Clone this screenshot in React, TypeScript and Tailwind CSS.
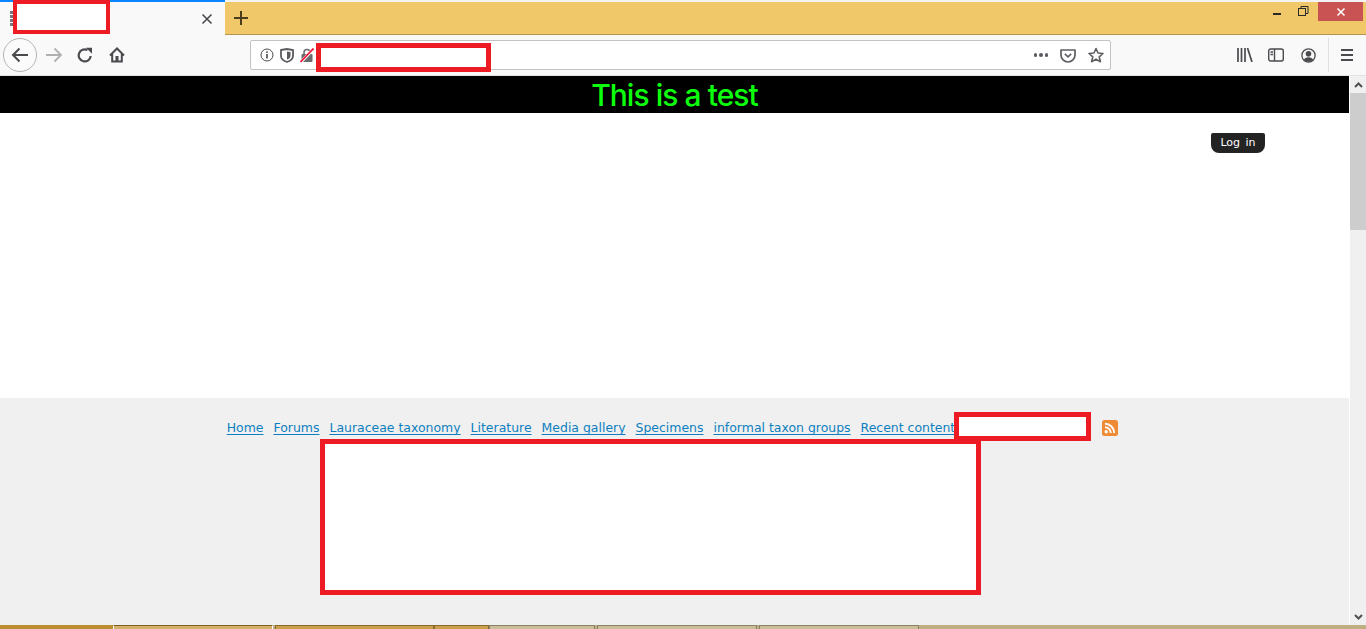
import React from "react";

const Links = ["Home", "Forums", "Lauraceae taxonomy", "Literature", "Media gallery", "Specimens", "informal taxon groups", "Recent content"];

function Ico({ className, children, w = 16, h = 16 }: { className?: string; children: React.ReactNode; w?: number; h?: number }) {
  return (
    <svg width={w} height={h} viewBox={`0 0 ${w} ${h}`} fill="none" stroke="#4a4a4f" strokeWidth="1.6" className={className}>
      {children}
    </svg>
  );
}

function TitleBar() {
  return (
    <div className="flex h-[35px] shrink-0 bg-[#f0c869] border-b border-[#b8954a] border-t-2 border-t-[#f3f3f3]">
      <div className="relative -mt-[2px] flex h-[35px] w-[225px] shrink-0 items-center border-t-2 border-[#0a84ff] bg-[#f9f9fa]">
        <div className="ml-[10px] flex w-[4px] flex-col gap-[1px]">
          {[0, 1, 2, 3].map((i) => (
            <div key={i} className="h-[3px] w-[4px] bg-[#77777a]" />
          ))}
        </div>
        <div className="-ml-[1px] -mt-[2px] h-[34px] w-[97px] self-start border-[4px] border-[#ed1c24] bg-white" />
        <Ico className="ml-[90px]" w={14} h={14}>
          <path d="M2.5 2.5 L11.5 11.5 M11.5 2.5 L2.5 11.5" stroke="#45454a" strokeWidth="1.5" />
        </Ico>
      </div>
      <div className="ml-[8px] mt-[8px]">
        <Ico w={16} h={16}>
          <path d="M8 1 V15 M1 8 H15" stroke="#4a3d1e" strokeWidth="2" />
        </Ico>
      </div>
      <div className="ml-auto flex items-start">
        <svg width="8" height="2" className="mt-[11px] mr-[17px]"><rect width="8" height="2" fill="#2a2a2a" /></svg>
        <svg width="11" height="11" viewBox="0 0 11 11" fill="none" stroke="#2a2a2a" className="mt-[4px] mr-[9px]">
          <rect x="0.5" y="2.5" width="7" height="7" />
          <path d="M3 2.5 V0.5 H10 V7.5 H8" />
        </svg>
        <div className="flex h-[19px] w-[45px] items-center justify-center bg-[#c95252] mr-[3px]">
          <svg width="10" height="10" viewBox="0 0 10 10" stroke="#fff" strokeWidth="1.5"><path d="M1.5 1.5 L8.5 8.5 M8.5 1.5 L1.5 8.5" /></svg>
        </div>
      </div>
    </div>
  );
}

function NavBar() {
  return (
    <div className="flex h-[41px] shrink-0 items-center bg-[#f9f9fa] border-b border-[#e3e3e3]">
      <div className="ml-[3px] flex h-[34px] w-[34px] items-center justify-center rounded-full border border-[#b5b5b6] bg-[#fbfbfb]">
        <svg width="18" height="16" viewBox="0 0 18 16" fill="none" stroke="#4a4a4f" strokeWidth="2"><path d="M17 8 H2 M8.5 1.5 L2 8 L8.5 14.5" /></svg>
      </div>
      <svg width="18" height="16" viewBox="0 0 18 16" fill="none" stroke="#b1b1b3" strokeWidth="1.8" className="ml-[8px]"><path d="M1 8 H16 M9.5 1.5 L16 8 L9.5 14.5" /></svg>
      <Ico className="ml-[14px]" w={16} h={16}>
        <path d="M13.7 9 A6 6 0 1 1 10.5 3.1" strokeWidth="2.2" />
        <path d="M9 0.8 H15 V6.8 Z" fill="#4a4a4f" stroke="none" />
      </Ico>
      <Ico className="ml-[16px]" w={16} h={16}>
        <path d="M1 8.5 L8 1.5 L15 8.5 M3.2 7 V14.5 H12.8 V7" strokeWidth="2" />
        <rect x="6.5" y="9" width="3" height="5.5" fill="#4a4a4f" stroke="none" />
      </Ico>

      <div className="ml-[125px] flex h-[30px] w-[861px] items-center rounded-[2px] border border-[#c3c3c3] bg-white">
        <svg width="14" height="14" viewBox="0 0 14 14" fill="none" className="ml-[9px]">
          <circle cx="7" cy="7" r="6" stroke="#4a4a4f" />
          <rect x="6.2" y="6" width="1.6" height="4.5" fill="#4a4a4f" />
          <rect x="6.2" y="3.3" width="1.6" height="1.6" fill="#4a4a4f" />
        </svg>
        <svg width="14" height="15" viewBox="0 0 14 15" fill="none" className="ml-[6px]">
          <path d="M1 2 L7 1 L13 2 V8 C13 11 10 13 7 14 C4 13 1 11 1 8 Z" stroke="#5a5a5f" strokeWidth="1.8" />
          <path d="M7 3.5 L10.5 4 V8 C10.5 9.5 9 11 7 11.5 Z" fill="#5a5a5f" />
        </svg>
        <svg width="14" height="15" viewBox="0 0 14 15" fill="none" className="ml-[6px]">
          <path d="M4 6 V4.5 A3 3 0 0 1 10 4.5 V6" stroke="#6a6a6f" strokeWidth="1.5" />
          <rect x="1.5" y="6" width="11" height="8" rx="1" fill="#6a6a6f" />
          <path d="M0.5 14.5 L13.5 1" stroke="#f9f9fa" strokeWidth="3" />
          <path d="M0.5 14 L13.5 0.5" stroke="#ed1c3c" strokeWidth="1.8" />
        </svg>
        <div className="ml-[2px] mt-[2px] h-[29px] w-[175px] shrink-0 self-start border-[5px] border-[#ed1c24] bg-white" />
        <div className="ml-auto flex items-center gap-[2px]">
          <span className="h-[3.5px] w-[3.5px] rounded-full bg-[#5a5a5f]" />
          <span className="h-[3.5px] w-[3.5px] rounded-full bg-[#5a5a5f]" />
          <span className="h-[3.5px] w-[3.5px] rounded-full bg-[#5a5a5f]" />
        </div>
        <svg width="16" height="15" viewBox="0 0 16 15" fill="none" className="ml-[12px]">
          <path d="M1 2 H15 V7 A7 7 0 0 1 1 7 Z" stroke="#5f5f63" strokeWidth="1.7" strokeLinejoin="round" />
          <path d="M4.8 5.8 L8 8.8 L11.2 5.8" stroke="#5f5f63" strokeWidth="1.7" />
        </svg>
        <svg width="16" height="16" viewBox="0 0 16 16" fill="none" className="ml-[12px] mr-[6px]">
          <path d="M8 1.5 L10 6 L15 6.5 L11.2 9.8 L12.4 14.7 L8 12.1 L3.6 14.7 L4.8 9.8 L1 6.5 L6 6 Z" stroke="#5f5f63" strokeWidth="1.6" strokeLinejoin="round" />
        </svg>
      </div>

      <svg width="16" height="14" viewBox="0 0 16 14" className="ml-[126px]" fill="none" stroke="#4a4a4f">
        <path d="M1 0 V14 M4.5 0 V14 M8 0 V14" strokeWidth="1.7" />
        <path d="M10.5 0 L15 14" strokeWidth="1.7" />
      </svg>
      <svg width="16" height="14" viewBox="0 0 16 14" className="ml-[15px]" fill="none" stroke="#4a4a4f" strokeWidth="1.4">
        <rect x="0.7" y="1" width="14.6" height="12" rx="2" />
        <path d="M6.5 1 V13" />
        <path d="M2.5 4 H5 M2.5 6.5 H5" />
      </svg>
      <svg width="15" height="15" viewBox="0 0 15 15" className="ml-[17px]" fill="none">
        <circle cx="7.5" cy="7.5" r="6.6" stroke="#4a4a4f" strokeWidth="1.3" />
        <circle cx="7.5" cy="5.7" r="2.8" fill="#4a4a4f" />
        <path d="M2.8 11.8 A5 4 0 0 1 12.2 11.8 A6.5 6.5 0 0 1 2.8 11.8 Z" fill="#4a4a4f" />
      </svg>
      <div className="ml-[12px] h-[34px] w-px bg-[#e1e1e2]" />
      <svg width="14" height="12" viewBox="0 0 14 12" className="ml-[11px]" stroke="#4a4a4f" strokeWidth="1.8"><path d="M1 1 H13 M1 6 H13 M1 11 H13" /></svg>
    </div>
  );
}

function Scrollbar() {
  return (
    <div className="flex w-[16px] shrink-0 flex-col items-center bg-[#f0f0f0] ml-px">
      <div className="flex h-[17px] w-full items-center justify-center">
        <svg width="9" height="6" viewBox="0 0 9 6" fill="none" stroke="#505050" strokeWidth="2"><path d="M1 5 L4.5 1.5 L8 5" /></svg>
      </div>
      <div className="h-[137px] w-full bg-[#cdcdcd]" />
      <div className="flex-1" />
      <div className="flex h-[17px] w-full items-center justify-center">
        <svg width="9" height="6" viewBox="0 0 9 6" fill="none" stroke="#505050" strokeWidth="2"><path d="M1 1 L4.5 4.5 L8 1" /></svg>
      </div>
    </div>
  );
}

function Page() {
  return (
    <div className="flex min-w-0 flex-1 flex-col">
      <div className="h-[37px] shrink-0 bg-black pt-[1px] text-center font-['Inter',sans-serif] text-[30px] font-medium leading-[37px] tracking-[-0.95px] text-[#0cff0c]">
        This is a test
      </div>
      <div className="flex h-[285px] shrink-0 justify-end bg-white pr-[84px] pt-[20px]">
        <div className="flex h-[20px] w-[54px] items-center justify-center rounded-b-[8px] rounded-t-[2px] bg-[#232323] pt-[1px] font-['DejaVu_Sans',sans-serif] text-[11px] text-white [word-spacing:2px]">
          Log in
        </div>
      </div>
      <div className="flex min-h-0 flex-1 flex-col items-center bg-[#f0f0f0] pr-[4px] pt-[14px]">
        <div className="flex h-[29px] items-center font-['DejaVu_Sans',sans-serif] text-[12.46px] text-[#0d7fc0]">
          <div className="flex gap-[10px] pt-[4px]">
            {Links.map((l) => (
              <a key={l} className="underline underline-offset-2">{l}</a>
            ))}
          </div>
          <div className="-ml-[1px] h-[29px] w-[137px] shrink-0 border-[5px] border-[#ed1c24] bg-white" />
          <svg width="16" height="16" viewBox="0 0 16 16" className="ml-[11px] mt-[3px]">
            <rect width="16" height="16" rx="2.5" fill="#ef8a35" />
            <circle cx="4.2" cy="11.8" r="1.7" fill="#fff" />
            <path d="M3 7.2 A5.8 5.8 0 0 1 8.8 13 M3 3.8 A9.2 9.2 0 0 1 12.2 13" fill="none" stroke="#fff" strokeWidth="1.9" />
          </svg>
        </div>
        <div className="-mt-[2px] mr-[45px] h-[156px] w-[661px] border-[5px] border-[#ed1c24] bg-white" />
      </div>
    </div>
  );
}

function TaskStrip() {
  const tab = "h-[4px] border-t border-x";
  return (
    <div className="flex h-[4px] shrink-0 bg-[#bfae82]">
      <div className="h-full w-[113px] bg-[#bb8f30]" />
      <div className={`${tab} w-[160px] border-[#fff] border-t-[#7d5f25] bg-[#d4b26c]`} />
      <div className={`${tab} ml-[2px] w-[159px] border-[#8a6a2e] bg-[#cc9f4d]`} />
      <div className={`${tab} w-[55px] border-[#8a6a2e] bg-[#cc9f4d]`} />
      <div className={`${tab} w-[106px] border-[#8a8268] bg-[#cbbd98]`} />
      <div className={`${tab} ml-[2px] w-[160px] border-[#8a8268] bg-[#cbbd98]`} />
      <div className={`${tab} ml-[2px] w-[160px] border-[#8a8268] bg-[#cbbd98]`} />
    </div>
  );
}

export default function App() {
  return (
    <div className="flex h-[629px] w-[1366px] flex-col overflow-hidden">
      <TitleBar />
      <NavBar />
      <div className="flex min-h-0 flex-1">
        <Page />
        <Scrollbar />
      </div>
      <TaskStrip />
    </div>
  );
}
